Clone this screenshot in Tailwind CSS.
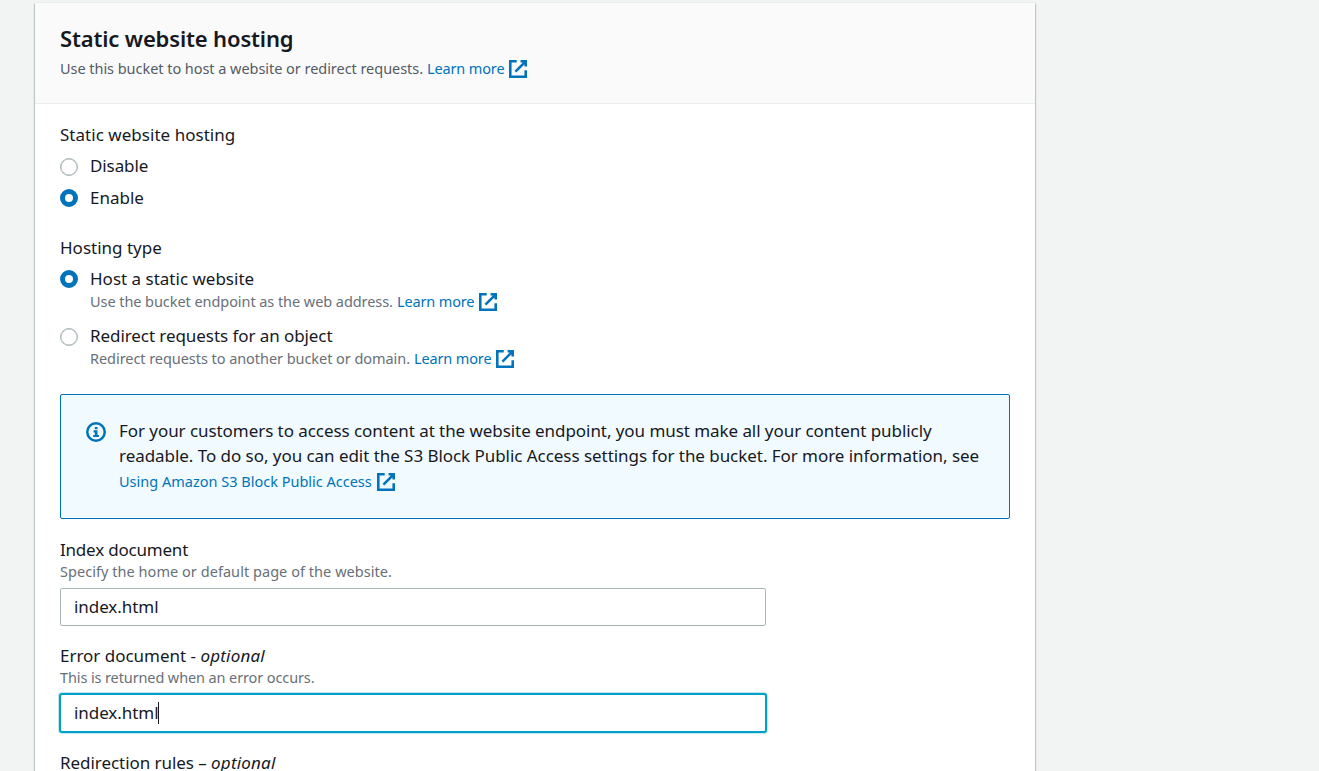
<!DOCTYPE html>
<html lang="en">
<head>
<meta charset="utf-8">
<title>Static website hosting</title>
<script src="https://cdn.jsdelivr.net/npm/@tailwindcss/browser@4"></script>
</head>
<body class="h-[771px] overflow-hidden bg-[#f2f3f3] font-['Noto_Sans',sans-serif] text-[17px] leading-[25px] text-[#16191f]">
<svg class="hidden"><defs>
  <symbol id="external" viewBox="1 1 14 14"><path d="M10 2h4v4M6 10l8-8M14 9.048V14H2V2h5" fill="none" stroke="#0073bb" stroke-width="2"/></symbol>
</defs></svg>
<main class="ml-[35px] mt-[3px] h-[800px] w-[1000px] bg-white shadow-[0_1px_1px_0_#c0c6c6,1px_1px_1px_0_#c0c6c6,-1px_1px_1px_0_#c0c6c6,0_0_0_1px_#eaeded]">
  <header class="h-[101px] border-b border-[#eaeded] bg-[#fafafa] px-[25px] pt-[21px]">
    <h2 class="text-[22px] leading-[28px] font-semibold tracking-[-0.15px]">Static website hosting</h2>
    <p class="mt-1.5 flex h-5 items-end text-[14.5px] leading-5 text-[#545b64]"><span class="tracking-[-0.045px]">Use this bucket to host a website or redirect requests.</span><a class="ml-1 flex items-end gap-[5px] tracking-[-0.14px] text-[#0073bb]">Learn more<svg class="size-[18px]"><use href="#external"/></svg></a></p>
  </header>
  <section class="px-[25px] pt-[18px]">
    <h3 class="tracking-[0.03px]">Static website hosting</h3>
    <label class="mt-1.5 flex gap-3"><span class="mt-[5px] size-[18px] rounded-full border-[1.5px] border-[#aab7b8] bg-white shadow-[inset_0_0_0_0.4px_#aab7b8]"></span><span class="tracking-[-0.1px]">Disable</span></label>
    <label class="mt-[7px] flex gap-3"><span class="mt-1 size-[18px] rounded-full border-[5px] border-[#0073bb] bg-white"></span><span>Enable</span></label>
    <h3 class="mt-[25px]">Hosting type</h3>
    <label class="mt-1.5 flex gap-3"><span class="mt-1 size-[18px] rounded-full border-[5px] border-[#0073bb] bg-white"></span><span>Host a static website</span></label>
    <p class="ml-[30px] flex h-5 items-end text-[14.5px] leading-5 text-[#687078]"><span class="tracking-[-0.065px]">Use the bucket endpoint as the web address.</span><a class="ml-1 flex items-end gap-[5px] tracking-[-0.14px] text-[#0073bb]">Learn more<svg class="size-[18px]"><use href="#external"/></svg></a></p>
    <label class="mt-3 flex gap-3"><span class="mt-[5px] size-[18px] rounded-full border-[1.5px] border-[#aab7b8] bg-white shadow-[inset_0_0_0_0.4px_#aab7b8]"></span><span class="tracking-[-0.07px]">Redirect requests for an object</span></label>
    <p class="ml-[30px] flex h-5 items-end text-[14.5px] leading-5 text-[#687078]"><span class="tracking-[-0.056px]">Redirect requests to another bucket or domain.</span><a class="ml-1 flex items-end gap-[5px] tracking-[-0.14px] text-[#0073bb]">Learn more<svg class="size-[18px]"><use href="#external"/></svg></a></p>
    <div class="mt-[26px] flex h-[125px] gap-[13px] rounded-[2px] border border-[#0073bb] bg-[#f1faff] pl-[25px] pt-[23px]">
      <svg class="mt-1 size-5 shrink-0" viewBox="0 0 20 20"><circle cx="10" cy="10" r="8.75" fill="none" stroke="#0073bb" stroke-width="2.5"/><path d="M8.8 5h2.7v2.3H8.8zM7.6 8.3h3.9v4.6h1.4v2.2H7.2v-2.2h1.6v-2.4H7.6z" fill="#0073bb"/></svg>
      <div class="whitespace-nowrap">
        <p class="tracking-[-0.062px]">For your customers to access content at the website endpoint, you must make all your content publicly</p>
        <p class="tracking-[-0.048px]">readable. To do so, you can edit the S3 Block Public Access settings for the bucket. For more information, see</p>
        <a class="mt-[3px] flex h-5 items-end gap-[5px] text-[14.5px] leading-5 text-[#0073bb]">Using Amazon S3 Block Public Access<svg class="size-[18px]"><use href="#external"/></svg></a>
      </div>
    </div>
    <h3 class="mt-[18px] h-6 tracking-[-0.2px]">Index document</h3>
    <p class="text-[14.5px] leading-5 tracking-[0.045px] text-[#687078]">Specify the home or default page of the website.</p>
    <div class="mt-[7px] h-[38px] w-[706px] rounded-[2px] border border-[#aab7b8] bg-white pl-[13px] pt-[5px] tracking-[-0.06px]">index.html</div>
    <h3 class="mt-[17px] h-6 tracking-[-0.02px]">Error document - <i class="tracking-[0.2px]">optional</i></h3>
    <p class="text-[14.5px] leading-5 tracking-[-0.115px] text-[#687078]">This is returned when an error occurs.</p>
    <div class="mt-[7px] flex h-[38px] w-[706px] rounded-[2px] border border-[#00a1c9] bg-white pl-[13px] pt-[5px] tracking-[-0.06px] shadow-[0_0_0_1px_#00a1c9,0_0_0_2px_#bfe7f1]">index.html<span class="mt-[2px] h-[22px] w-px bg-[#16191f]"></span></div>
    <h3 class="mt-[18px] tracking-[-0.055px]">Redirection rules – <i class="tracking-[0.2px]">optional</i></h3>
  </section>
</main>
</body>
</html>
